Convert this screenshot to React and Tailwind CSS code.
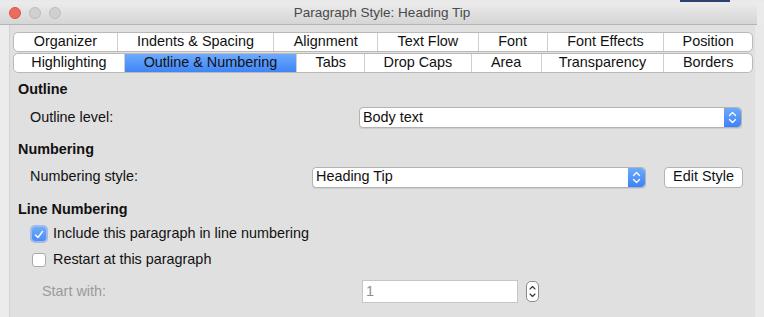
import React from 'react';

const row1 = [
  ['Organizer', 103],
  ['Indents & Spacing', 157],
  ['Alignment', 104],
  ['Text Flow', 101],
  ['Font', 69],
  ['Font Effects', 117],
  ['Position', 89],
];

const row2 = [
  ['Highlighting', 110],
  ['Outline & Numbering', 173],
  ['Tabs', 68],
  ['Drop Caps', 107],
  ['Area', 70],
  ['Transparency', 123],
  ['Borders', 89],
];

function TabRow({ tabs, active }) {
  return (
    <div className="flex h-[20px] rounded-[5px] border border-[#b9b9b9] bg-white overflow-hidden w-[740px]">
      {tabs.map(([label, w], i) => (
        <div
          key={label}
          style={{ width: w }}
          className={
            'flex items-center justify-center text-[14.4px] text-[#111] ' +
            (i > 0 ? 'border-l border-[#cfcfcf] ' : '') +
            (label === active ? 'bg-gradient-to-b from-[#6eaafb] to-[#3e85f7]' : '')
          }
        >
          {label}
        </div>
      ))}
    </div>
  );
}

function Stepper() {
  return (
    <div className="w-[17px] h-full bg-gradient-to-b from-[#6eaafb] to-[#3b82f6] rounded-r-[4px] flex items-center justify-center">
      <svg width="9" height="13" viewBox="0 0 9 13" fill="none">
        <path d="M1.5 4.5L4.5 1.5L7.5 4.5" stroke="white" strokeWidth="1.3" strokeLinecap="round" strokeLinejoin="round" />
        <path d="M1.5 8.5L4.5 11.5L7.5 8.5" stroke="white" strokeWidth="1.3" strokeLinecap="round" strokeLinejoin="round" />
      </svg>
    </div>
  );
}

function Select({ value, width }) {
  return (
    <div
      style={{ width }}
      className="h-[21px] flex bg-white border border-[#b3b3b3] rounded-[4px] shadow-[0_1px_0_rgba(0,0,0,0.08)]"
    >
      <div className="flex-1 flex items-center pl-[3px] text-[14.4px] text-[#111]">{value}</div>
      <Stepper />
    </div>
  );
}

export default function App() {
  return (
    <div
      className="w-[764px] h-[317px] overflow-hidden bg-[#ebebeb] flex flex-col"
      style={{ fontFamily: '"Liberation Sans", Arial, sans-serif' }}
    >
      {/* Desktop sliver */}
      <div className="h-[2px] flex">
        <div className="w-[680px] bg-[#e9e9e9]" />
        <div className="w-[50px] bg-[#2d3f73]" />
        <div className="flex-1 bg-[#e9e9e9]" />
      </div>

      {/* Title bar */}
      <div className="h-[23px] flex items-center bg-gradient-to-b from-[#ececec] to-[#d5d5d5] border-b border-[#b4b4b4] rounded-tr-[5px] mr-[7px]">
        <div className="flex items-center gap-[8px] pl-[9px]">
          <div className="w-[12px] h-[12px] rounded-full bg-[#ec6a5e] border border-[#d6574c]" />
          <div className="w-[12px] h-[12px] rounded-full bg-[#d0d0d0] border border-[#bdbdbd]" />
          <div className="w-[12px] h-[12px] rounded-full bg-[#d0d0d0] border border-[#bdbdbd]" />
        </div>
        <div className="flex-1 text-center text-[13.5px] text-[#4a4a4a] pr-[54px]">Paragraph Style: Heading Tip</div>
      </div>

      {/* Body */}
      <div className="flex flex-1">
        <div className="w-[10px] border-r border-[#d3d3d3] bg-[#ececec]" />
        <div className="w-[745px] bg-[#e0e0e0] pl-[3px] pt-[7px] flex flex-col text-[#111]">
          <div className="flex flex-col gap-[1px]">
            <TabRow tabs={row1} />
            <TabRow tabs={row2} active="Outline & Numbering" />
          </div>

          <div className="h-[34px] flex items-center pl-[5px] text-[14.4px] font-bold">Outline</div>
          <div className="h-[21px] flex items-center">
            <div className="w-[346px] pl-[17px] text-[14.4px]">Outline level:</div>
            <Select value="Body text" width={383} />
          </div>

          <div className="h-[20px] mt-[12px] flex items-center pl-[5px] text-[14.4px] font-bold">Numbering</div>
          <div className="h-[22px] mt-[6px] flex items-center">
            <div className="w-[299px] pl-[17px] text-[14.4px]">Numbering style:</div>
            <Select value="Heading Tip" width={334} />
            <div className="ml-[18px] w-[79px] h-[21px] bg-white border border-[#b3b3b3] rounded-[4px] flex items-center justify-center text-[14.4px]">
              Edit Style
            </div>
          </div>

          <div className="h-[20px] mt-[12px] flex items-center pl-[5px] text-[14.4px] font-bold">Line Numbering</div>
          <div className="h-[20px] mt-[4px] flex items-center pl-[19px]">
            <div className="w-[14px] h-[14px] rounded-[3px] bg-gradient-to-b from-[#70acfb] to-[#4a8cf7] shadow-[0_0_0_2px_rgba(96,150,246,0.5)] flex items-center justify-center">
              <svg width="10" height="9" viewBox="0 0 10 9" fill="none">
                <path d="M1.5 5L4 7.5L8.5 1.5" stroke="white" strokeWidth="1.4" strokeLinecap="round" strokeLinejoin="round" />
              </svg>
            </div>
            <span className="ml-[7px] text-[14.4px]">Include this paragraph in line numbering</span>
          </div>
          <div className="h-[20px] mt-[6px] flex items-center pl-[19px]">
            <div className="w-[14px] h-[14px] rounded-[3px] bg-white border border-[#a9a9a9]" />
            <span className="ml-[7px] text-[14.4px]">Restart at this paragraph</span>
          </div>

          <div className="h-[23px] mt-[10px] flex items-center">
            <div className="w-[349px] pl-[29px] text-[14.4px] text-[#9a9a9a]">Start with:</div>
            <div className="w-[156px] h-[23px] bg-white border border-[#c6c6c6] flex items-center pl-[3px] text-[14.4px] text-[#8c8c8c]">1</div>
            <div className="ml-[8px] w-[13px] h-[21px] bg-white border border-[#8a8a8a] rounded-[5px] flex items-center justify-center">
              <svg width="7" height="15" viewBox="0 0 7 15" fill="none">
                <path d="M1 5L3.5 2.5L6 5" stroke="#333" strokeWidth="1.1" strokeLinecap="round" strokeLinejoin="round" />
                <path d="M1 10L3.5 12.5L6 10" stroke="#333" strokeWidth="1.1" strokeLinecap="round" strokeLinejoin="round" />
              </svg>
            </div>
          </div>
        </div>
        <div className="flex-1 bg-[#e9e9e9]" />
      </div>
    </div>
  );
}
